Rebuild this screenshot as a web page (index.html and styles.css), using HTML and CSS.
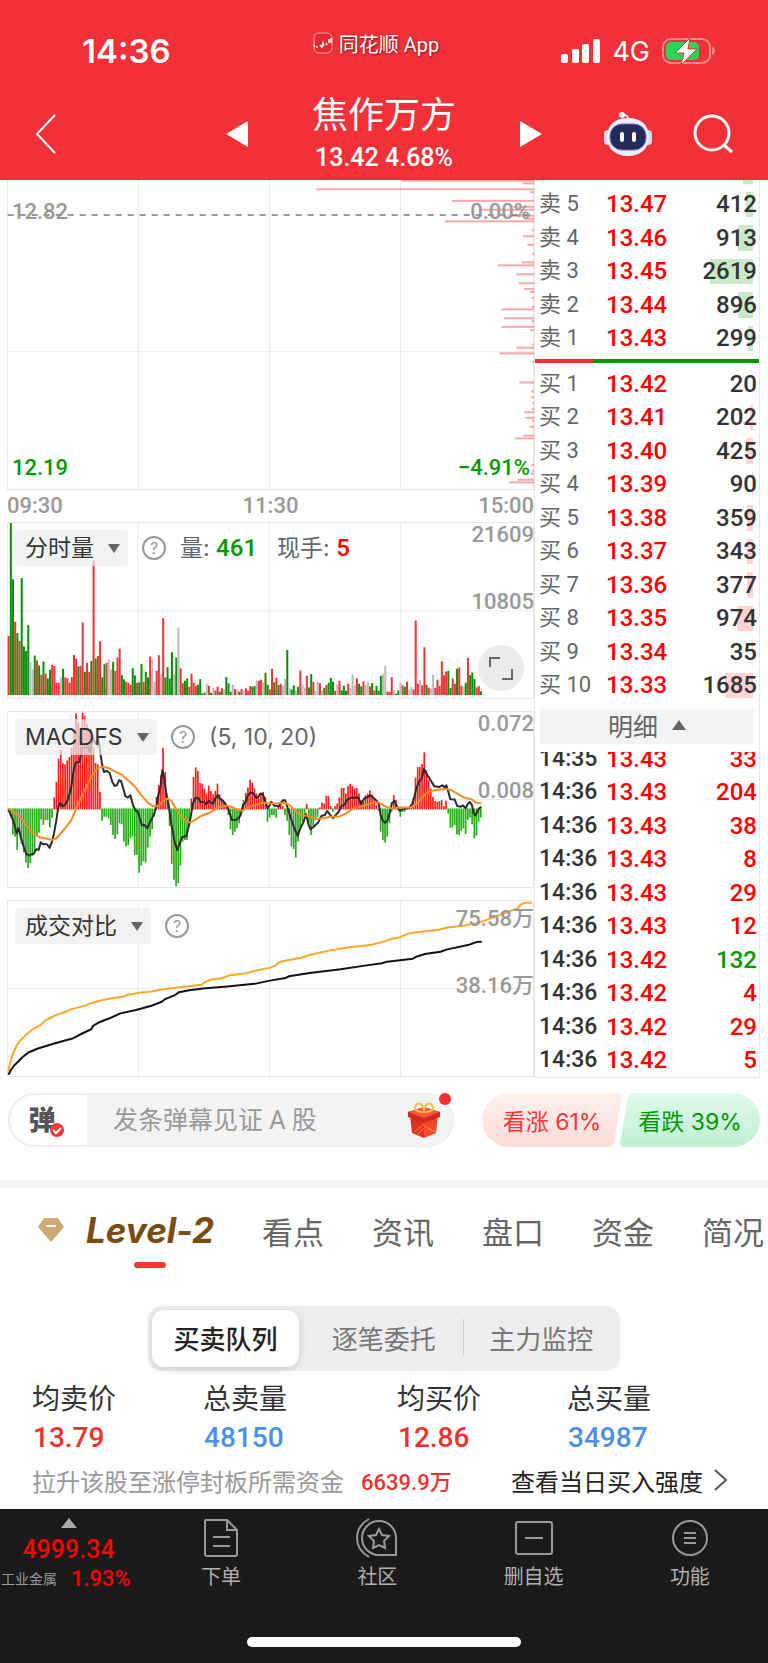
FILE: index.html
```html
<!DOCTYPE html>
<html lang="zh-CN">
<head>
    <meta charset="UTF-8">
    <meta name="viewport" content="width=device-width, initial-scale=1">
    <title>焦作万方</title>
    <link rel="stylesheet" href="styles.css">
</head>
<body>
<header id="header">
    <div class="status">
        <span class="time">14:36</span>
        <span class="app">
            <svg width="20" height="22" viewBox="0 0 20 22" fill="none">
                <rect x="1" y="1" width="18" height="20" rx="5" fill="#e8262d" stroke="#f9a5a8"/>
                <path d="M1 13l1 2M3 15h2M7 13l2 2 1-4 1 3M13 11l1 2M16 7v4M18 6v5" stroke="#fff" stroke-width="1.5"/>
            </svg>
            同花顺 App
        </span>
        <span class="signal">
            <svg width="39" height="24" viewBox="0 0 39 24" fill="#fff">
                <rect x="0" y="15" width="7" height="9" rx="2"/>
                <rect x="11" y="10" width="7" height="14" rx="2"/>
                <rect x="21" y="5" width="7" height="19" rx="2"/>
                <rect x="32" y="0" width="7" height="24" rx="2"/>
            </svg>
            <span>4G</span>
            <svg width="54" height="28" viewBox="0 0 54 28">
                <rect x="1" y="2" width="47" height="24" rx="8" fill="none" stroke="#f98b8f" stroke-width="2"/>
                <path d="M50 10c4 1 4 7 0 8z" fill="#f98b8f"/>
                <rect x="4" y="5" width="33" height="18" rx="5" fill="#30d158"/>
                <path d="M28 1L13 16h9l-3 12 16-16h-9z" fill="#fff" stroke="#f23038" stroke-width="1"/>
            </svg>
        </span>
    </div>
    <nav class="nav">
        <button class="back" aria-label="返回">
            <svg width="22" height="40" viewBox="0 0 22 40" fill="none" stroke="#fff" stroke-width="2"><path d="M20 1L2 20l18 19"/></svg>
        </button>
        <div class="stock">
            <button aria-label="上一只"><svg width="22" height="26" viewBox="0 0 22 26" fill="#fff"><path d="M22 0v26L0 13z"/></svg></button>
            <div class="name">
                <h1>焦作万方</h1>
                <p>13.42 4.68%</p>
            </div>
            <button aria-label="下一只"><svg width="22" height="26" viewBox="0 0 22 26" fill="#fff"><path d="M0 0v26l22-13z"/></svg></button>
        </div>
        <div class="tools">
            <button aria-label="助手">
                <svg width="48" height="44" viewBox="0 0 48 44">
                    <path d="M24 7c0-3-1-4-5-4" fill="none" stroke="#e4e6f7" stroke-width="2"/>
                    <circle cx="18" cy="3" r="3" fill="#f3f3fc"/>
                    <rect x="0" y="18" width="8" height="15" rx="4" fill="#d5d6f0"/>
                    <rect x="40" y="18" width="8" height="15" rx="4" fill="#d5d6f0"/>
                    <path d="M24 6c13 0 21 7 21 19s-9 19-21 19S3 37 3 25 11 6 24 6z" fill="#eceefa"/>
                    <rect x="6" y="12" width="36" height="26" rx="12" fill="#232c57" stroke="#7b61d8"/>
                    <rect x="16" y="20" width="4" height="10" rx="2" fill="#fff"/>
                    <rect x="28" y="20" width="4" height="10" rx="2" fill="#fff"/>
                </svg>
            </button>
            <button aria-label="搜索">
                <svg width="40" height="40" viewBox="0 0 40 40" fill="none" stroke="#fff" stroke-width="3"><circle cx="19" cy="19" r="17"/><path d="M31 31l8 7"/></svg>
            </button>
        </div>
    </nav>
</header>

<main>
<div id="market">
    <section class="charts">
        <div class="chart price-chart">
            <svg id="price" viewBox="20 28 1532 934" preserveAspectRatio="none">
                <path class="grid" d="M402 28V962M783 28V962M1164 28V962M20 547H1552"/>
                <path class="dash" d="M22 134H1552"/>
            </svg>
            <span class="label base left">12.82</span>
            <span class="label base right">0.00%</span>
            <span class="label low left">12.19</span>
            <span class="label low right">−4.91%</span>
        </div>
        <div class="axis"><span>09:30</span><span>11:30</span><span>15:00</span></div>

        <div class="chart">
            <svg id="volume" viewBox="22 22 1581 528" preserveAspectRatio="none">
                <path class="grid" d="M415 22V550M809 22V550M1203 22V550M22 287H1603"/>
            </svg>
            <div class="bar">
                <label class="tag"><select aria-label="指标一"><option>分时量</option></select><svg width="12" height="9" viewBox="0 0 12 9"><path d="M0 0h12L6 9z"/></svg></label>
                <button class="help" aria-label="说明">?</button>
                <span>量: <b class="green">461</b></span>
                <span>现手: <b class="red">5</b></span>
            </div>
            <span class="label top">21609</span>
            <span class="label mid">10805</span>
            <button class="full" aria-label="全屏">
                <svg width="24" height="24" viewBox="0 0 24 24" fill="none" stroke="#666" stroke-width="2"><path d="M1 11V2h10M23 13v10H13"/></svg>
            </button>
        </div>

        <div class="chart">
            <svg id="macd" viewBox="22 34 1581 528" preserveAspectRatio="none">
                <path class="grid" d="M415 34V562M809 34V562M1203 34V562M22 298H1603"/>
            </svg>
            <div class="bar">
                <label class="tag"><select aria-label="指标二"><option>MACDFS</option></select><svg width="12" height="9" viewBox="0 0 12 9"><path d="M0 0h12L6 9z"/></svg></label>
                <button class="help" aria-label="说明">?</button>
                <span>(5, 10, 20)</span>
            </div>
            <span class="label top">0.072</span>
            <span class="label mid">0.008</span>
        </div>

        <div class="chart compare">
            <svg id="compare" viewBox="20 31 1532 528" preserveAspectRatio="none">
                <path class="grid" d="M402 31V559M783 31V559M1164 31V559M20 295H1552"/>
            </svg>
            <div class="bar">
                <label class="tag"><select aria-label="指标三"><option>成交对比</option></select><svg width="12" height="9" viewBox="0 0 12 9"><path d="M0 0h12L6 9z"/></svg></label>
                <button class="help" aria-label="说明">?</button>
            </div>
            <span class="label top">75.58万</span>
            <span class="label mid">38.16万</span>
        </div>
    </section>

    <aside class="book">
        <div class="clip sell">
            <table>
                <tr><th>卖 6</th><td>13.48</td><td><i style="width:10px"></i></td></tr>
                <tr><th>卖 5</th><td>13.47</td><td><i style="width:7px"></i><span>412</span></td></tr>
                <tr><th>卖 4</th><td>13.46</td><td><i style="width:15px"></i><span>913</span></td></tr>
                <tr><th>卖 3</th><td>13.45</td><td><i style="width:43px"></i><span>2619</span></td></tr>
                <tr><th>卖 2</th><td>13.44</td><td><i style="width:15px"></i><span>896</span></td></tr>
                <tr><th>卖 1</th><td>13.43</td><td><i style="width:5px"></i><span>299</span></td></tr>
            </table>
        </div>
        <div class="ratio"></div>
        <div class="buy">
            <table>
                <tr><th>买 1</th><td>13.42</td><td><span>20</span></td></tr>
                <tr><th>买 2</th><td>13.41</td><td><i style="width:3px"></i><span>202</span></td></tr>
                <tr><th>买 3</th><td>13.40</td><td><i style="width:7px"></i><span>425</span></td></tr>
                <tr><th>买 4</th><td>13.39</td><td><i style="width:1px"></i><span>90</span></td></tr>
                <tr><th>买 5</th><td>13.38</td><td><i style="width:6px"></i><span>359</span></td></tr>
                <tr><th>买 6</th><td>13.37</td><td><i style="width:6px"></i><span>343</span></td></tr>
                <tr><th>买 7</th><td>13.36</td><td><i style="width:6px"></i><span>377</span></td></tr>
                <tr><th>买 8</th><td>13.35</td><td><i style="width:16px"></i><span>974</span></td></tr>
                <tr><th>买 9</th><td>13.34</td><td><i style="width:1px"></i><span>35</span></td></tr>
                <tr><th>买 10</th><td>13.33</td><td><i style="width:28px"></i><span>1685</span></td></tr>
            </table>
        </div>
        <button class="detail-btn">明细 <svg width="14" height="10" viewBox="0 0 14 10"><path d="M0 10h14L7 0z" fill="#666"/></svg></button>
        <div class="clip detail">
            <table>
                <tr><th>14:35</th><td>13.43</td><td class="red">33</td></tr>
                <tr><th>14:36</th><td>13.43</td><td class="red">204</td></tr>
                <tr><th>14:36</th><td>13.43</td><td class="red">38</td></tr>
                <tr><th>14:36</th><td>13.43</td><td class="red">8</td></tr>
                <tr><th>14:36</th><td>13.43</td><td class="red">29</td></tr>
                <tr><th>14:36</th><td>13.43</td><td class="red">12</td></tr>
                <tr><th>14:36</th><td>13.42</td><td class="green">132</td></tr>
                <tr><th>14:36</th><td>13.42</td><td class="red">4</td></tr>
                <tr><th>14:36</th><td>13.42</td><td class="red">29</td></tr>
                <tr><th>14:36</th><td>13.42</td><td class="red">5</td></tr>
            </table>
        </div>
    </aside>
</div>

<div id="danmu">
    <div class="send">
        <button class="switch" aria-label="弹幕开关">弹
            <svg width="16" height="16" viewBox="0 0 16 16"><circle cx="8" cy="8" r="7" fill="#f5383b"/><path d="M4 8l3 3 5-5" fill="none" stroke="#fff" stroke-width="2"/></svg>
        </button>
        <input type="text" aria-label="弹幕" placeholder="发条弹幕见证 A 股">
        <button class="gift" aria-label="礼物">
            <svg width="32" height="36" viewBox="0 0 32 36">
                <path d="M2 13l14 5v18L4 31z" fill="#e2321f"/>
                <path d="M30 13l-14 5v18l12-5z" fill="#f04a2a"/>
                <path d="M0 10L16 5l16 5v5l-16 6L0 15z" fill="#d42a1c"/>
                <path d="M0 10l16-5 16 5-16 6z" fill="#f4573a"/>
                <path d="M16 22L6 30M16 26l-7 7M16 24l12 6" stroke="#fb8a4c" stroke-width="1"/>
                <path d="M16 10C8 10 5 7 8 3s8 0 8 7c0-7 5-11 8-7s0 7-8 7z" fill="none" stroke="#f6c04d" stroke-width="2"/>
            </svg>
        </button>
        <i class="dot"></i>
    </div>
    <div class="vote">
        <button class="up"><svg viewBox="0 0 140 54" preserveAspectRatio="none"><defs><linearGradient id="gu" x2="0" y2="1"><stop offset="0" stop-color="#fff0ee"/><stop offset="1" stop-color="#fddcd8"/></linearGradient></defs><path d="M27 0H136q5 0 4 5L132 49q-1 5-6 5H27A27 27 0 0 1 27 0z" fill="url(#gu)"/></svg><span>看涨 61%</span></button>
        <button class="down"><svg viewBox="0 0 140 54" preserveAspectRatio="none"><defs><linearGradient id="gd" x2="0" y2="1"><stop offset="0" stop-color="#e2faec"/><stop offset="1" stop-color="#bdf0d2"/></linearGradient></defs><path d="M14 0H113a27 27 0 0 1 0 54H4q-5 0-4-5L8 5q1-5 6-5z" fill="url(#gd)"/></svg><span>看跌 39%</span></button>
    </div>
</div>

<nav id="tab">
    <a href="#" class="level">
        <svg width="28" height="28" viewBox="0 0 28 28"><path d="M7 2h14l6 9-13 15L1 11z" fill="#d0a877"/><path d="M9 10h10" stroke="#fff" stroke-width="2"/></svg>
        <span>Level-2</span>
    </a>
    <a href="#">看点</a>
    <a href="#">资讯</a>
    <a href="#">盘口</a>
    <a href="#">资金</a>
    <a href="#">简况</a>
</nav>

<section id="queue">
    <div class="segment">
        <button class="selected">买卖队列</button>
        <button>逐笔委托</button>
        <button>主力监控</button>
    </div>
    <dl class="stats">
        <div><dt>均卖价</dt><dd>13.79</dd></div>
        <div><dt>总卖量</dt><dd class="blue">48150</dd></div>
        <div><dt>均买价</dt><dd>12.86</dd></div>
        <div><dt>总买量</dt><dd class="blue">34987</dd></div>
    </dl>
    <div class="fund">
        <span>拉升该股至涨停封板所需资金</span>
        <strong>6639.9万</strong>
        <a href="#">查看当日买入强度
            <svg width="14" height="22" viewBox="0 0 14 22" fill="none" stroke="#555" stroke-width="2"><path d="M1 1l11 10L1 21"/></svg>
        </a>
    </div>
</section>
</main>

<footer id="footer">
    <nav>
        <a href="#" class="index">
            <svg width="16" height="10" viewBox="0 0 16 10"><path d="M0 10h16L8 0z" fill="#aaa"/></svg>
            <b>4999.34</b>
            <span>工业金属 <em>1.93%</em></span>
        </a>
        <a href="#">
            <svg width="40" height="40" viewBox="0 0 40 40"><path d="M4 2h22l10 10v24q0 2-2 2H6q-2 0-2-2V4q0-2 2-2M26 2v10h10M12 19h17M12 28h17"/></svg>
            下单
        </a>
        <a href="#">
            <svg width="44" height="40" viewBox="0 0 44 40"><path d="M24 3a17 17 0 0 1 17 17v17H24a17 17 0 0 1 0-34zM14 1C-2 10-2 30 14 39"/><path d="M24 11l3 6 7 1-5 5 1 7-6-3-6 3 1-7-5-5 7-1z"/></svg>
            社区
        </a>
        <a href="#">
            <svg width="40" height="40" viewBox="0 0 40 40"><rect x="2" y="4" width="36" height="32" rx="2"/><path d="M11 20h18"/></svg>
            删自选
        </a>
        <a href="#">
            <svg width="40" height="40" viewBox="0 0 40 40"><circle cx="20" cy="20" r="17"/><path d="M14 15h12M14 20h12M14 25h12"/></svg>
            功能
        </a>
    </nav>
    <div class="home"></div>
</footer>
<script src="chart.js"></script>
</body>
</html>
```

FILE: styles.css
```css
* {
    margin: 0;
    padding: 0;
    box-sizing: border-box;
}

body {
    background: #fff;
    color: #333;
    font-family: Roboto, "Noto Sans CJK SC", sans-serif;
    font-size: 24px;
    overflow-x: hidden;
}

a {
    color: inherit;
    text-decoration: none;
}

button, input, select {
    border: 0;
    background: none;
    color: inherit;
    font: inherit;
}

button {
    display: flex;
    align-items: center;
    justify-content: center;
}

svg {
    display: block;
    flex: none;
}

.red {
    color: #f00;
}

.green {
    color: #009900;
}

/* 顶部 */
#header {
    background: #f23038;
    color: #fff;
}

.status {
    display: grid;
    grid-template-columns: 1fr auto 1fr;
    height: 88px;
    padding: 14px 52px 0 82px;
    font-family: Inter, "Noto Sans CJK SC", sans-serif;
}

.time {
    align-self: center;
    font-size: 33px;
    font-weight: 600;
}

.app {
    display: flex;
    align-items: center;
    gap: 6px;
    height: 58px;
    margin-right: 46px;
    font-family: Roboto, "Noto Sans CJK SC", sans-serif;
    font-size: 20px;
    text-shadow: 1px 1px 2px rgba(0, 0, 0, .5);
}

.signal {
    display: flex;
    align-items: center;
    justify-content: flex-end;
    gap: 12px;
    font-size: 27px;
}

.nav {
    display: grid;
    grid-template-columns: 1fr auto 1fr;
    height: 92px;
    padding: 0 35px;
}

.back {
    justify-self: start;
    align-self: center;
    height: 80px;
}

.stock {
    display: flex;
    align-items: center;
    gap: 64px;
}

.name {
    padding-top: 2px;
    text-align: center;
}

.name h1 {
    font-size: 36px;
    font-weight: 400;
    line-height: 46px;
}

.name p {
    font-size: 25px;
    font-weight: 500;
    line-height: 38px;
}

.tools {
    display: flex;
    align-items: center;
    justify-content: flex-end;
    gap: 41px;
}

/* 分时图 */
#market {
    display: grid;
    grid-template-columns: minmax(0, 1fr) 226px;
    padding: 0 8px 0 7px;
}

.charts {
    display: flex;
    flex-direction: column;
    gap: 12px;
}

.chart {
    position: relative;
    height: 177px;
    border: 1px solid #e8e8e8;
}

.chart > svg {
    width: calc(100% + 2px);
    height: 100%;
    margin: 0 -1px;
}

.price-chart {
    height: 310px;
    border-top: 0;
}

.grid {
    stroke: #ececec;
    stroke-width: 1;
    vector-effect: non-scaling-stroke;
}

.dash {
    stroke: #999;
    stroke-width: 2;
    stroke-dasharray: 6 6;
    vector-effect: non-scaling-stroke;
}

.line {
    fill: none;
    stroke-width: 2;
    stroke-linejoin: round;
    vector-effect: non-scaling-stroke;
}

.label {
    position: absolute;
    right: -1px;
    color: #999;
    font-size: 22px;
    font-weight: 500;
    line-height: 24px;
}

.label.left {
    right: auto;
    left: 4px;
}

.label.right {
    right: 3px;
}

.base {
    top: 20px;
}

.low {
    bottom: 9px;
    color: #009900;
}

.top {
    top: 0;
}

.mid {
    top: 67px;
}

.compare .top {
    top: 6px;
}

.compare .mid {
    top: 73px;
}

.axis {
    display: flex;
    justify-content: space-between;
    margin: -8px 0;
    color: #999;
    font-size: 22px;
    font-weight: 500;
    line-height: 24px;
}

.bar {
    position: absolute;
    top: 7px;
    left: 7px;
    display: flex;
    align-items: center;
    gap: 14px;
    color: #666;
    font-family: Inter, "Noto Sans CJK SC", sans-serif;
    font-size: 23px;
    line-height: 36px;
}

.bar b {
    font-weight: 500;
    font-family: Roboto, sans-serif;
    font-size: 24px;
}

.bar span + span {
    margin-left: 6px;
}

.tag {
    position: relative;
    display: flex;
    align-items: center;
    height: 36px;
    border-radius: 4px;
    background: rgba(238, 238, 238, .7);
    color: #333;
}

.tag select {
    appearance: none;
    padding: 0 34px 0 10px;
}

.tag svg {
    position: absolute;
    right: 8px;
    fill: #666;
}

.help {
    width: 24px;
    height: 24px;
    border: 2px solid #999;
    border-radius: 50%;
    color: #999;
    font-size: 16px;
    line-height: 20px;
}

.full {
    position: absolute;
    right: 9px;
    bottom: 7px;
    width: 46px;
    height: 46px;
    border-radius: 50%;
    background: #ebebeb;
}

/* 五档盘口 */
.book {
    border: 1px solid #e8e8e8;
    border-top: 0;
    font-size: 24px;
    font-weight: 500;
}

.book table {
    width: 100%;
    height: 335px;
    border-collapse: collapse;
    line-height: 28px;
}

.clip {
    display: flex;
    align-items: flex-end;
    overflow: hidden;
}

.book .sell table {
    height: 201px;
}

.sell {
    height: 175px;
}

.detail {
    height: 325px;
}

.book th {
    width: 71px;
    padding-left: 4px;
    color: #666;
    font-size: 22px;
    font-weight: 400;
    text-align: left;
}

.book .detail th {
    color: #333;
    font-size: 23px;
    font-weight: 500;
}

.book td {
    color: #f00;
}

.book td:last-child {
    position: relative;
    padding-right: 2px;
    text-align: right;
}

.book td span {
    position: relative;
    color: #333;
}

.book td.green {
    color: #009900;
}

.book i {
    position: absolute;
    top: 4px;
    bottom: 4px;
    right: 6px;
    background: #c9eac9;
}

.buy i {
    background: #fdd3d3;
}

.ratio {
    height: 4px;
    margin: 4px 0;
    background: linear-gradient(90deg, #f0302f 26%, #009900 26%);
}

.detail-btn {
    gap: 14px;
    width: calc(100% - 10px);
    height: 35px;
    margin: 7px 5px 8px;
    padding-bottom: 3px;
    background: #f4f4f4;
    color: #666;
    font-size: 25px;
    font-weight: 400;
}

/* 弹幕 */
#danmu {
    display: flex;
    align-items: center;
    gap: 28px;
    padding: 15px 8px 33px;
    border-bottom: 8px solid #f4f4f4;
}

.send {
    position: relative;
    display: flex;
    align-items: center;
    flex: 1;
    min-width: 0;
    height: 54px;
    border: 2px solid #eee;
    border-radius: 27px;
    background: linear-gradient(90deg, #fff 77px, #f4f4f4 77px);
}

.switch {
    position: relative;
    width: 64px;
    padding-bottom: 4px;
    color: #555;
    font-size: 27px;
    font-weight: 900;
}

.switch svg {
    position: absolute;
    right: 9px;
    bottom: 4px;
}

.send input {
    flex: 1;
    min-width: 0;
    padding-left: 39px;
    font-size: 25px;
}

.send input::placeholder {
    color: #999;
}

.gift {
    margin-right: 12px;
}

.dot {
    position: absolute;
    top: -2px;
    right: 1px;
    width: 12px;
    height: 12px;
    border-radius: 50%;
    background: #f0302f;
}

.vote {
    display: flex;
    width: 278px;
    font-family: Inter, "Noto Sans CJK SC", sans-serif;
    font-size: 23px;
}

.vote button {
    position: relative;
    flex: 1;
    height: 54px;
    color: #f5383b;
}

.vote .down {
    color: #009900;
    margin-left: -2px;
}

.vote svg {
    position: absolute;
    width: 100%;
    height: 100%;
}

.vote span {
    position: relative;
}

/* 标签 */
#tab {
    display: flex;
    align-items: center;
    gap: 48px;
    height: 118px;
    padding: 0 0 34px 37px;
    color: #666;
    font-size: 31px;
    white-space: nowrap;
    overflow: hidden;
}

.level {
    position: relative;
    display: flex;
    align-items: center;
    gap: 21px;
    color: #7a4c10;
    font-family: Inter, sans-serif;
    font-size: 35px;
    font-style: italic;
    font-weight: 700;
    line-height: 44px;
}

.level::after {
    content: "";
    position: absolute;
    right: 48px;
    bottom: -16px;
    width: 32px;
    height: 6px;
    border-radius: 3px;
    background: #fc3630;
}

#queue {
    padding: 0 32px;
}

.segment {
    display: flex;
    width: 472px;
    height: 65px;
    margin: 0 auto;
    padding: 4px 0 4px 4px;
    border-radius: 14px;
    background: #eeeef0;
    color: #777;
    font-size: 26px;
}

.segment button {
    position: relative;
    flex: 1;
    padding-bottom: 3px;
}

.segment .selected {
    flex: none;
    width: 147px;
    margin-right: 6px;
    border-radius: 12px;
    background: #fff;
    box-shadow: 0 2px 8px rgba(0, 0, 0, .15);
    color: #222;
    font-weight: 500;
}

.segment button:last-child::before {
    content: "";
    position: absolute;
    left: 0;
    width: 1px;
    height: 36px;
    background: #ccc;
}

.stats {
    display: grid;
    grid-template-columns: 171px 194px 170px 1fr;
    margin-top: 10px;
    font-size: 28px;
    line-height: 38px;
}

.stats dd {
    padding-left: 1px;
    color: #f0302f;
    font-weight: 500;
}

.stats .blue {
    color: #4a90e8;
}

.fund {
    display: flex;
    align-items: center;
    height: 52px;
    padding-bottom: 6px;
    color: #999;
    font-size: 24px;
    white-space: nowrap;
}

.fund strong {
    margin-left: 17px;
    color: #f0302f;
    font-size: 22px;
    font-weight: 500;
}

.fund a {
    display: flex;
    align-items: center;
    gap: 11px;
    margin: 0 8px 0 auto;
    color: #222;
}

/* 底部 */
#footer {
    padding: 8px 0 17px;
    background: #1a1a1a;
    color: #b0b0b0;
}

#footer nav {
    display: flex;
    height: 120px;
}

#footer a {
    display: flex;
    flex: 1;
    flex-direction: column;
    align-items: center;
    gap: 4px;
    font-size: 20px;
    line-height: 30px;
}

#footer a svg {
    margin-top: 1px;
    fill: none;
    stroke: #999;
    stroke-width: 2;
}

#footer .index {
    flex: none;
    gap: 0;
    width: 143px;
    padding-right: 6px;
    color: #f00;
    white-space: nowrap;
}

#footer .index svg {
    stroke: none;
}

.index b {
    margin-top: 8px;
    font-size: 25px;
    font-weight: 500;
    line-height: 28px;
}

.index span {
    display: flex;
    align-items: center;
    align-self: flex-start;
    gap: 14px;
    padding-left: 1px;
    color: #999;
    font-size: 14px;
}

.index em {
    color: #f00;
    font-size: 22px;
    font-style: normal;
    font-weight: 500;
}

.home {
    width: 274px;
    height: 10px;
    margin: 0 auto;
    border-radius: 5px;
    background: #fff;
}
```

FILE: chart.js
```js
var NS = 'http://www.w3.org/2000/svg';
var oPrice = document.getElementById('price');
var oVolume = document.getElementById('volume');
var oMacd = document.getElementById('macd');
var oCompare = document.getElementById('compare');

function add(parent, tag, attrs) {
    var el = document.createElementNS(NS, tag);
    for (var k in attrs) {
        el.setAttribute(k, attrs[k]);
    }
    parent.appendChild(el);
}

// 一根柱子的横坐标
function barX(i) {
    return 27 + 6.53 * i;
}

// 筹码: 起点x, y
var aChip = [[1167, 30], [1519, 38], [919, 56], [1540, 65], [1314, 91], [1490, 109], [1394, 118], [1476, 136], [1525, 145], [1293, 153],
    [1546, 180], [1520, 198], [1533, 224], [1547, 252], [1516, 277], [1446, 286], [1501, 313], [1507, 340], [1523, 357], [1540, 366],
    [1545, 384], [1546, 411], [1457, 419], [1465, 446], [1545, 455], [1457, 472], [1541, 482], [1547, 525], [1501, 535], [1452, 552],
    [1547, 578], [1509, 640], [1543, 667], [1544, 685], [1547, 703], [1546, 720], [1524, 730], [1527, 747], [1546, 756], [1539, 774],
    [1521, 801], [1496, 809], [1544, 889], [1547, 907], [1542, 916], [1503, 934], [1479, 942]];
aChip.forEach(function (p) {
    add(oPrice, 'rect', {x: p[0], y: p[1] - 3, width: 1552 - p[0], height: 6, fill: '#f02f35', 'fill-opacity': .42});
});

// 成交量: r红 g绿 x平, 后面是柱顶y
var sVol = 'r363 g22 g192 r320 g354 r378 g188 g394 g408 g330 x441 x464 g422 r437 g452 r480 g440 r476 g491 g465 ' +
    'r450 r453 r504 r504 x488 g462 r488 r491 r504 r487 r420 r431 g455 r453 r322 g471 r444 r471 g438 r134 ' +
    'g431 r423 r379 g488 g448 r444 x434 x464 g441 r468 r428 r401 g480 g494 r501 r504 r510 g460 g482 r504 ' +
    'g503 g447 r501 g471 g488 r425 x433 x501 r468 r421 x478 r309 g488 g457 g491 g412 x478 g428 x337 r461 ' +
    'r505 g498 g491 r516 r477 r504 r514 g510 g493 g536 g534 x508 r513 g534 x520 r527 r516 g531 r521 x524 ' +
    'g487 g506 g531 x510 r523 x524 g531 r523 x528 r521 r528 r514 g516 g514 x497 r498 r495 x503 g474 g510 ' +
    'r524 r462 g503 r489 g511 r507 x512 x492 g405 x520 g524 g512 x528 g516 r467 x509 x520 r483 g518 g478 ' +
    'r501 x530 x501 r505 x528 g519 r511 g504 g489 g501 r528 x509 r498 g527 g513 g528 r507 x521 x479 x512 ' +
    'r491 g507 g515 r500 x511 x501 r515 g505 r527 g513 g528 g483 x478 x453 r531 r531 r487 x525 g537 g527 ' +
    'x504 r512 g516 r501 x525 x517 r524 r316 r507 x496 r512 r397 g510 r519 x521 x479 r519 r495 r513 r440 ' +
    'r482 r470 g468 g520 r491 r507 g462 r458 r513 x516 g504 r429 g481 g473 g493 r518 r514 g530';
var oColor = {r: '#ef3235', g: '#079107', x: '#bbb'};
sVol.split(' ').forEach(function (s, i) {
    var y = +s.slice(1);
    add(oVolume, 'rect', {x: barX(i) - 3, y: y, width: 6, height: 541 - y, fill: oColor[s.charAt(0)]});
});

// MACD柱
var aMacd = [335, 350, 404, 410, 450, 400, 432, 458, 488, 505, 490, 468, 455, 408, 398, 358, 375, 360, 360, 382, 354,
    292, 245, 175, 148, 188, 192, 180, 170, 143, 100, 38, 65, 95, 36, 45, 70, 85, 84, 140, 188, 192, 275,
    362, 350, 350, 355, 375, 405, 417, 403, 370, 372, 425, 440, 436, 415, 410, 465, 465, 519, 497, 485, 488, 443, 410, 388, 350,
    290, 255, 225, 142, 215, 295, 378, 492, 540, 560, 550, 497, 425, 420, 420, 370, 295, 230, 201, 212, 248, 250, 265, 280, 256, 272, 282, 272, 250, 282, 295, 305, 318,
    345, 388, 405, 395, 385, 370, 335, 300, 278, 262, 238, 247, 265, 280, 295, 285, 275, 290, 365, 352,
    345, 345, 353, 318, 310, 318, 345, 362, 405, 440, 447, 473, 425, 390, 365, 350, 311, 370, 405, 378, 360, 350,
    322, 307, 310, 287, 288, 318, 335, 318, 310, 292, 263, 263, 280, 257, 251, 257, 265, 263, 280, 300, 305, 285, 280, 270, 283, 295, 315,
    332, 395, 420, 428, 410, 370, 335, 285, 300, 322, 350, 335, 335, 322, 322, 318, 295, 232, 200, 200, 190, 156, 210, 240, 265, 290, 303, 305, 303, 300, 318, 302,
    340, 383, 383, 375, 403, 405, 392, 385, 402, 360, 353, 373, 415, 407, 365, 352];
aMacd.forEach(function (y, i) {
    var up = y < 327;
    add(oMacd, 'rect', {
        x: barX(i) - 3, y: up ? y : 325, width: 5,
        height: up ? 328 - y : y - 325, fill: up ? '#ff1a1a' : '#22ab14'
    });
});

function line(parent, color, points) {
    add(parent, 'polyline', {'class': 'line', stroke: color, points: points});
}

line(oMacd, '#2b2b2b', '27,330 38,355 45,375 51,400 57,385 64,415 72,440 80,462 88,467 95,463 102,462 110,448 117,450 123,427 130,433 137,432 143,434 150,444 157,425 163,400 170,360 176,320 182,308 188,318 195,315 205,298 214,265 222,210 228,187 240,184 247,143 258,140 265,140 272,155 280,110 288,130 297,120 303,165 308,195 313,215 322,212 330,218 338,245 345,257 352,255 358,240 364,242 370,262 377,288 385,292 392,285 400,315 408,332 415,335 421,358 427,376 435,375 443,385 450,368 457,355 464,340 470,320 475,290 482,260 488,210 494,235 500,280 508,320 513,360 520,400 526,430 533,450 540,430 547,412 560,408 567,380 573,350 580,310 588,292 597,295 603,306 612,305 620,313 627,302 634,308 641,310 647,295 654,285 660,295 670,302 678,312 684,320 690,340 697,360 707,360 716,355 723,345 730,315 738,305 745,285 752,277 762,280 768,292 775,292 782,280 790,283 797,305 804,325 810,315 ' +
    '815,305 823,316 832,318 838,318 843,308 850,300 856,300 863,320 872,350 882,380 894,408 902,385 912,365 919,342 927,375 933,388 942,380 955,368 965,348 975,345 983,333 992,345 1000,354 1008,345 1017,335 1025,318 1035,313 1043,298 1053,293 1076,292 1084,312 1094,295 1105,290 1111,285 1122,293 1132,303 1138,315 1143,345 1150,363 1157,368 1164,360 1171,335 1177,308 1185,303 1191,318 1200,332 1210,327 1220,325 1230,322 1238,310 1244,290 1250,265 1258,245 1266,235 1273,205 1280,220 1288,232 1296,245 1304,258 1320,260 1328,255 1335,262 1340,255 1346,275 1352,297 1365,298 1373,318 1382,320 1390,316 1398,325 1404,312 1410,305 1417,315 1422,340 1427,346 1433,335 1438,325 1445,320');
line(oMacd, '#fb8a24', '27,326 45,338 62,352 80,375 100,400 120,412 145,417 157,420 170,415 185,398 200,380 215,360 230,325 245,290 262,255 280,222 295,202 310,200 325,202 345,213 365,222 385,240 405,258 425,285 445,308 460,318 475,318 490,302 502,295 515,302 530,328 545,350 560,364 572,367 585,360 605,347 630,338 655,322 680,316 700,322 715,330 730,331 745,322 765,314 790,308 810,310 ' +
    '830,310 855,308 870,315 890,335 905,346 925,347 940,354 955,356 975,354 990,350 1020,349 1045,337 1065,322 1090,318 1110,310 1135,306 1155,318 1175,325 1200,322 1235,322 1250,312 1265,295 1280,278 1295,272 1320,268 1340,266 1355,270 1375,282 1395,293 1415,297 1428,307 1445,310');

line(oCompare, '#ffa62b', '24,545 30,515 38,490 48,467 60,450 78,432 92,420 118,405 130,392 145,384 165,374 182,369 205,358 250,346 262,340 290,332 320,325 360,319 370,314 410,307 440,304 470,298 510,293 585,284 596,275 615,268 640,265 665,256 720,248 735,243 785,232 800,226 812,215 835,210 875,202 900,194 925,188 960,180 1010,171 1080,163 1120,152 1135,146 1160,141 1185,130 1210,125 1275,118 1300,111 1350,105 1390,97 1430,82 1470,66 1505,53 1512,43 1525,36 1546,36');
line(oCompare, '#111', '24,555 32,540 40,528 52,516 64,503 82,488 110,476 160,460 210,446 240,430 265,418 270,408 290,396 320,384 350,370 395,360 440,347 470,335 478,328 510,314 520,306 550,300 590,295 660,289 740,281 780,272 830,263 840,258 900,248 990,237 1060,226 1110,219 1125,214 1200,205 1208,200 1235,191 1280,184 1300,177 1360,164 1385,155 1400,154');
```
